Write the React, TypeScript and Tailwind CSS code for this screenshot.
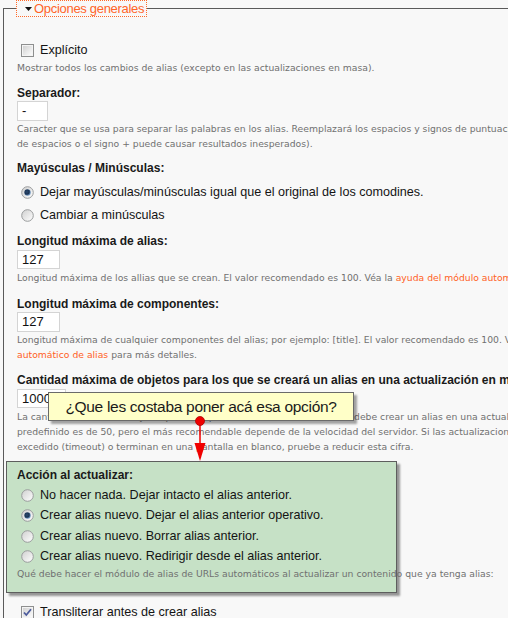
import React from 'react';

const desc = "whitespace-nowrap font-['DejaVu_Sans',Verdana,sans-serif] text-[9.25px] leading-[15px] text-[#707070]";
const heading = "whitespace-nowrap font-['Liberation_Sans',Arial,sans-serif] text-[12px] font-bold leading-[15px] text-[#1a1a1a]";
const optionText = "whitespace-nowrap font-['Liberation_Sans',Arial,sans-serif] text-[12.6px] text-[#141414]";
const link = 'text-[#ff5f1f]';

const Radio: React.FC<{ checked?: boolean }> = ({ checked }) => (
  <svg width="13" height="13" viewBox="0 0 13 13" className="shrink-0">
    <defs>
      <linearGradient id="radioFace" x1="0" y1="0" x2="1" y2="1">
        <stop offset="0" stopColor="#cfcfcf" />
        <stop offset="1" stopColor="#ffffff" />
      </linearGradient>
      <radialGradient id="radioDot" cx="0.4" cy="0.4" r="0.6">
        <stop offset="0" stopColor="#2a4a70" />
        <stop offset="0.6" stopColor="#1b3353" />
        <stop offset="1" stopColor="#6f98c4" />
      </radialGradient>
    </defs>
    <circle cx="6.5" cy="6.5" r="5.8" fill="url(#radioFace)" stroke="#9a9c9d" strokeWidth="1" />
    {checked && <circle cx="6.5" cy="6.5" r="3.2" fill="url(#radioDot)" />}
  </svg>
);

const Checkbox: React.FC<{ checked?: boolean }> = ({ checked }) => (
  <svg width="13" height="13" viewBox="0 0 13 13" className="shrink-0">
    <defs>
      <linearGradient id="cbFace" x1="0" y1="0" x2="1" y2="1">
        <stop offset="0" stopColor="#d2d2d2" />
        <stop offset="1" stopColor="#fbfbfb" />
      </linearGradient>
    </defs>
    <rect x="0.5" y="0.5" width="12" height="12" fill="#f4f4f4" stroke="#8e8f8f" />
    <rect x="2" y="2" width="9" height="9" fill="url(#cbFace)" />
    {checked && (
      <path d="M3 6.5 L5.3 9 L10 3.3" fill="none" stroke="#4c5b9c" strokeWidth="1.8" />
    )}
  </svg>
);

const TextBox: React.FC<{ value: string; width: string; height: string }> = ({ value, width, height }) => (
  <div className={`${width} ${height} flex items-center border border-[#d4d4d4] bg-white pl-[4px] font-['Liberation_Sans',Arial,sans-serif] text-[13px] text-[#111]`}>
    {value}
  </div>
);

const OptionRow: React.FC<{ label: string; checked?: boolean; h: string }> = ({ label, checked, h }) => (
  <div className={`flex items-center gap-[6px] pl-[4px] ${h}`}>
    <Radio checked={checked} />
    <span className={optionText}>{label}</span>
  </div>
);

export default function App() {
  return (
    <div className="relative h-[618px] w-[508px] overflow-hidden bg-[#f8f8f8]">
      <fieldset className="ml-[3px] w-[820px] border-l border-t border-[#5a5a5a] pl-[13px]">
        <legend className="-ml-[1px]">
          <span className="flex h-[17px] items-center border border-dotted border-[#ff6a2a] pl-[8px] pr-[2px] font-['Liberation_Sans',Arial,sans-serif] text-[13px] tracking-[-0.3px] text-[#ff6428]">
            <svg width="7" height="4" viewBox="0 0 7 4" className="mr-[2px]">
              <polygon points="0,0 7,0 3.5,4" fill="#111" />
            </svg>
            Opciones generales
          </span>
        </legend>

        {/* Explícito */}
        <div className="mt-[26px] flex h-[14px] items-center gap-[6px] pl-[4px]">
          <Checkbox />
          <span className={optionText}>Explícito</span>
        </div>
        <p className={`mt-[3px] ${desc}`}>
          Mostrar todos los cambios de alias (excepto en las actualizaciones en masa).
        </p>

        {/* Separador */}
        <h3 className={`mt-[11px] ${heading}`}>Separador:</h3>
        <TextBox value="-" width="w-[31px]" height="h-[20px]" />
        <p className={desc}>
          Caracter que se usa para separar las palabras en los alias. Reemplazará los espacios y signos de puntuación con este caracter. El uso
        </p>
        <p className={desc}>de espacios o el signo + puede causar resultados inesperados).</p>

        {/* Mayúsculas */}
        <h3 className={`mt-[10px] ${heading}`}>Mayúsculas / Minúsculas:</h3>
        <div className="mt-[5px]">
          <OptionRow h="h-[23px]" checked label="Dejar mayúsculas/minúsculas igual que el original de los comodines." />
          <OptionRow h="h-[23px]" label="Cambiar a minúsculas" />
        </div>

        {/* Longitud alias */}
        <h3 className={`mt-[7px] ${heading}`}>Longitud máxima de alias:</h3>
        <div className="mt-[1px]">
          <TextBox value="127" width="w-[43px]" height="h-[19px]" />
        </div>
        <p className={`mt-[1px] ${desc}`}>
          Longitud máxima de los allias que se crean. El valor recomendado es 100. Véa la{' '}
          <span className={link}>ayuda del módulo automático de alias</span> para más detalles.
        </p>

        {/* Longitud componentes */}
        <h3 className={`mt-[12px] ${heading}`}>Longitud máxima de componentes:</h3>
        <TextBox value="127" width="w-[43px]" height="h-[20px]" />
        <p className={desc}>
          Longitud máxima de cualquier componentes del alias; por ejemplo: [title]. El valor recomendado es 100. Véa la{' '}
          <span className={link}>ayuda del módulo</span>
        </p>
        <p className={desc}>
          <span className={link}>automático de alias</span> para más detalles.
        </p>

        {/* Cantidad */}
        <h3 className={`mt-[11px] ${heading}`}>
          Cantidad máxima de objetos para los que se creará un alias en una actualización en masa:
        </h3>
        <div className="mt-[1px]">
          <TextBox value="1000" width="w-[49px]" height="h-[19px]" />
        </div>
        <div className="mt-[1px]">
          <p className={desc}>
            La cantidad máxima de objetos para los que el módulo de alias de URLs debe crear un alias en una actualización en masa. El valor
          </p>
          <p className={desc}>
            predefinido es de 50, pero el más recomendable depende de la velocidad del servidor. Si las actualizaciones en masa han
          </p>
          <p className={desc}>
            excedido (timeout) o terminan en una pantalla en blanco, pruebe a reducir esta cifra.
          </p>
        </div>

        {/* Acción al actualizar (resaltado) */}
        <div className="-ml-[11px] mt-[7px] box-border h-[132px] w-[391px] border border-[#5e5e5e] bg-[#c6e1c6] pl-[10px] pt-[6px] shadow-[3px_3px_2px_rgba(0,0,0,0.4)]">
          <h3 className={heading}>Acción al actualizar:</h3>
          <div className="mt-[2px]">
            <OptionRow h="h-[20px]" label="No hacer nada. Dejar intacto el alias anterior." />
            <OptionRow h="h-[21px]" checked label="Crear alias nuevo. Dejar el alias anterior operativo." />
            <OptionRow h="h-[20px]" label="Crear alias nuevo. Borrar alias anterior." />
            <OptionRow h="h-[20px]" label="Crear alias nuevo. Redirigir desde el alias anterior." />
          </div>
          <p className={`${desc} leading-[12px]`}>
            Qué debe hacer el módulo de alias de URLs automáticos al actualizar un contenido que ya tenga alias:
          </p>
        </div>

        {/* Transliterar */}
        <div className="mt-[12px] flex h-[14px] items-center gap-[6px] pl-[4px]">
          <Checkbox checked />
          <span className={optionText}>Transliterar antes de crear alias</span>
        </div>
        <div className="h-[40px]" />
      </fieldset>

      {/* Nota */}
      <div className="absolute left-[48px] top-[392px] z-10 flex h-[29px] w-[306px] items-center justify-center border border-[#6a6a6a] bg-[#ffffc8] font-['Liberation_Sans',Arial,sans-serif] text-[15.5px] tracking-[-0.3px] text-[#1a1a1a] shadow-[3px_3px_2px_rgba(0,0,0,0.35)]">
        ¿Que les costaba poner acá esa opción?
      </div>
      <svg className="absolute left-[193px] top-[414px] z-20" width="14" height="50" viewBox="0 0 14 50">
        <line x1="7" y1="7" x2="7" y2="32" stroke="#f00000" strokeWidth="1.5" />
        <polygon points="1.5,29 12.5,29 7,47" fill="#f00000" />
        <circle cx="7" cy="7" r="4.5" fill="#ee0000" stroke="#b00000" strokeWidth="0.8" />
      </svg>
    </div>
  );
}
